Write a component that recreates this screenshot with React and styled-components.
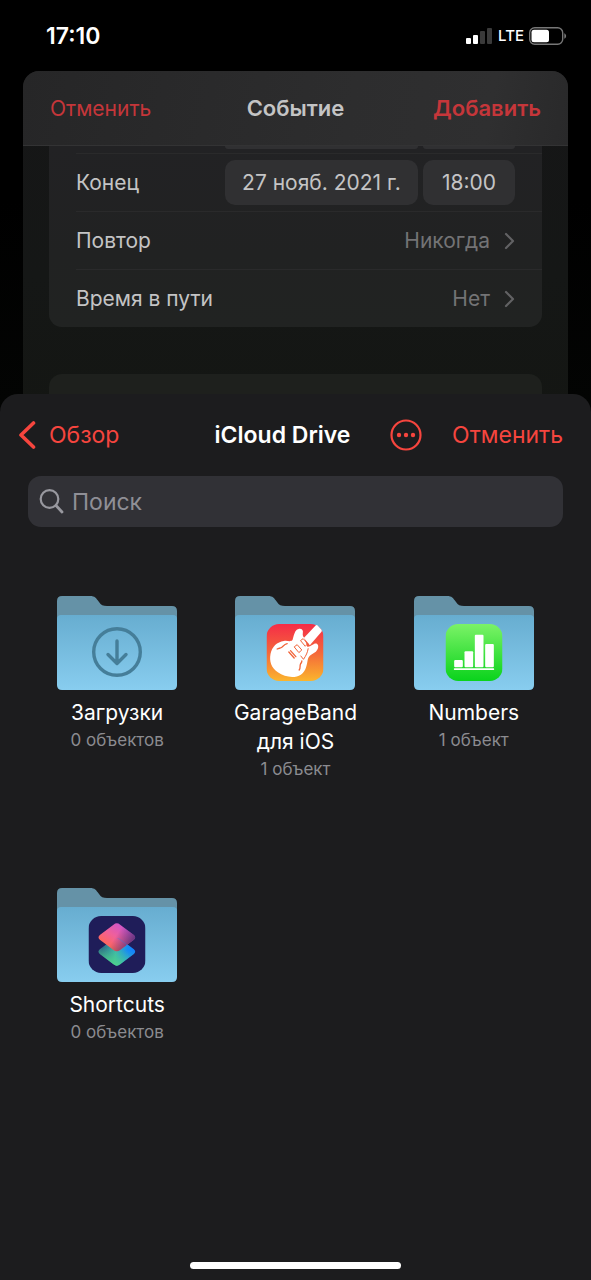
import React from "react";
import styled, { createGlobalStyle } from "styled-components";

const GlobalStyle = createGlobalStyle`
    * {
        box-sizing: border-box;
    }
    body {
        margin: 0;
        background: #000;
        font-family: Inter, "Liberation Sans", sans-serif;
        font-size: 21px;
    }
    button, input {
        font: inherit;
        color: inherit;
        border: 0;
        padding: 0;
        margin: 0;
        background: none;
    }
    h1, h2, p {
        margin: 0;
    }
`;

const Screen = styled.div`
    display: flex;
    flex-direction: column;
    min-height: 100vh;
    background: linear-gradient(#000 0, #000 200px, #030403 400px);
`;

const StatusBar = styled.header`
    display: flex;
    align-items: center;
    justify-content: space-between;
    height: 71px;
    padding: 0 24px 0 46px;
    color: #fff;
`;

const Clock = styled.time`
    font-size: 23px;
    font-weight: 600;
`;

const StatusIcons = styled.div`
    display: flex;
    align-items: center;
    gap: 5px;
    font-size: 15px;
    font-weight: 500;
`;

const EventSheet = styled.section`
    margin: 0 23px;
    border-radius: 16px 16px 0 0;
    overflow: hidden;
    background: linear-gradient(#161617, #151716 60%, #141613);
    color: #c4c4c5;
`;

const EventHeader = styled.div`
    display: grid;
    grid-template-columns: 1fr auto 1fr;
    align-items: center;
    height: 75px;
    padding: 0 27px;
    border-bottom: 1px solid #333334;
    background: linear-gradient(100deg, #262627, #2d2d2e 60%, #2f2f30 85%, #29292a);
`;

const EventTitle = styled.h2`
    font-size: 22px;
    font-weight: 600;
`;

const EventButton = styled.button`
    justify-self: ${props => props.$primary ? "end" : "start"};
    color: #c5363a;
    font-size: ${props => props.$primary ? 22 : 21}px;
    font-weight: ${props => props.$primary ? 600 : 400};
`;

const Group = styled.div`
    margin: 0 26px;
    padding-left: 27px;
    border-radius: 0 0 13px 13px;
    background: linear-gradient(#222224, #212222 60%, #212322);
`;

const NextGroup = styled.div`
    height: 40px;
    margin: 47px 26px 0;
    border-radius: 13px 13px 0 0;
    background: #1e201d;
`;

const Row = styled.div`
    display: flex;
    align-items: center;
    gap: 5px;
    height: 58px;
    padding-right: 27px;
    border-top: 1px solid #2a2a2b;
`;

const HiddenRow = styled(Row)`
    align-items: flex-start;
    justify-content: flex-end;
    height: 7px;
    border-top: 0;
`;

const PillEdge = styled.div`
    width: ${props => props.$wide ? 193 : 92}px;
    height: 3px;
    border-radius: 0 0 10px 10px;
    background: #303032;
`;

const RowLabel = styled.span`
    flex: 1;
    text-align: left;
`;

const Pill = styled.button`
    width: ${props => props.$wide ? 193 : 92}px;
    height: 45px;
    border-radius: 10px;
    background: #303032;
`;

const LinkRow = styled(Row).attrs({ as: "button" })`
    width: 100%;
    gap: 14px;
    border-top: 1px solid #2a2a2b;
    padding-right: 27px;
`;

const RowValue = styled.span`
    color: #737375;
`;

const FilesSheet = styled.main`
    position: relative;
    display: flex;
    flex: 1;
    flex-direction: column;
    margin-top: -20px;
    border-radius: 18px 18px 0 0;
    background: #1c1c1e;
    color: #fff;
`;

const FilesHeader = styled.div`
    display: flex;
    align-items: center;
    height: 82px;
    padding: 0 28px 0 18px;
    font-size: 23px;
`;

const FilesTitle = styled.h1`
    margin-right: 16px;
    font-size: 23px;
    font-weight: 600;
`;

const HeaderSide = styled.div`
    display: flex;
    flex: 1;
    align-items: center;
    justify-content: ${props => props.$end ? "flex-end" : "flex-start"};
    gap: 30px;
`;

const HeaderButton = styled.button`
    display: flex;
    align-items: center;
    gap: 12px;
    color: #f6453e;
`;

const SearchField = styled.label`
    display: flex;
    align-items: center;
    gap: 8px;
    height: 51px;
    margin: 0 28px;
    padding: 0 11px;
    border-radius: 13px;
    background: #313136;
    color: #98989f;
`;

const SearchInput = styled.input`
    flex: 1;
    min-width: 0;
    outline: 0;
    font-size: 23px;

    &::placeholder {
        color: #8f8f96;
        opacity: 1;
    }
`;

const FolderGrid = styled.div`
    display: grid;
    flex: 1;
    grid-template-columns: repeat(3, 1fr);
    grid-auto-rows: minmax(292px, auto);
    align-content: start;
    padding: 69px 28px 0;
`;

const Folder = styled.button`
    display: flex;
    flex-direction: column;
    align-items: center;
    align-self: start;
`;

const FolderName = styled.span`
    width: 136px;
    margin-top: 7px;
    line-height: 29px;
    font-size: 21px;
`;

const FolderCount = styled.span`
    line-height: 27px;
    font-size: 17px;
    color: #8b8b90;
`;

const HomeBar = styled.div`
    width: 211px;
    height: 7px;
    margin: 0 auto 11px;
    border-radius: 4px;
    background: #fff;
`;

function Signal() {
    return (
        <svg width="27" height="18" viewBox="0 0 27 18" aria-hidden="true">
            <rect x="0" y="11" width="5" height="6" rx="1" fill="#fff" />
            <rect x="7" y="8" width="5" height="9" rx="1" fill="#fff" />
            <rect x="14" y="4" width="5" height="13" rx="1" fill="#3a3a3a" />
            <rect x="21" y="1" width="5" height="16" rx="1" fill="#3a3a3a" />
        </svg>
    );
}

function Battery() {
    return (
        <svg width="38" height="18" viewBox="0 0 38 18" aria-hidden="true">
            <rect x="0.7" y="0.7" width="33" height="16.6" rx="5" fill="none" stroke="#777" strokeWidth="1.4" />
            <rect x="2.5" y="2.7" width="17.5" height="12.6" rx="2.5" fill="#fff" />
            <path d="M35.3 6.2c2.4 1.2 2.4 4.4 0 5.6z" fill="#777" />
        </svg>
    );
}

function Chevron() {
    return (
        <svg width="11" height="18" viewBox="0 0 11 18" aria-hidden="true">
            <path d="M2 2l7 7-7 7" fill="none" stroke="#626264" strokeWidth="2.2" strokeLinecap="round" strokeLinejoin="round" />
        </svg>
    );
}

function DownloadBadge() {
    return (
        <g fill="none" stroke="#457e99" strokeLinecap="round" strokeLinejoin="round">
            <circle cx="60" cy="56" r="23.3" strokeWidth="3.4" />
            <path d="M60 45v22M51 58.5l9 9 9-9" strokeWidth="3.4" />
        </g>
    );
}

function GarageBandBadge() {
    return (
        <svg x="31.5" y="28" width="57" height="57" viewBox="0 0 171 171">
            <defs>
                <linearGradient id="garage" x1="0" y1="0" x2="0" y2="1">
                    <stop offset="0" stopColor="#f52c48" />
                    <stop offset="0.5" stopColor="#f4673a" />
                    <stop offset="1" stopColor="#fbb52d" />
                </linearGradient>
            </defs>
            <rect width="171" height="171" rx="38" fill="url(#garage)" />
            <path
                fill="#fff"
                d="M78 48C82 36 84 18 96 15c10-2 15 4 13 12-1 6 0 10 4 14l10 28c14-2 20-14 29-9 6 5 3 17-4 23-9 7-20 9-24 23-3 16-5 36-21 46-18 12-48 8-69-7C14 131 8 112 12 90c4-22 20-36 40-39 12-2 20 4 26-3z"
            />
            <path d="M112 42l36-38q3-2 6 1l11 12q2 3 0 6l-35 41z" fill="#fff" />
            <g fill="none" stroke="#f1653b" strokeWidth="4" strokeLinecap="round" strokeLinejoin="round">
                <path d="M32 75c7-3 10-2 15-6 4-4 8-9 15-10" />
                <path d="M98 138c5-6 1-12 4-18 2-4 4-4 4-9" />
                <path d="M67 84l16 18M72 80l16 18" />
                <path d="M84 68l8-6 14 16-8 7zM103 49l7-5 14 15-7 7z" strokeWidth="3" />
                <path d="M103 96l8 10c8-12 12-20 14-32" strokeWidth="3" />
            </g>
        </svg>
    );
}

function NumbersBadge() {
    return (
        <svg x="31.5" y="28" width="57" height="57" viewBox="0 0 171 171">
            <defs>
                <linearGradient id="numbers" x1="0" y1="0" x2="0" y2="1">
                    <stop offset="0" stopColor="#7bf267" />
                    <stop offset="1" stopColor="#0ad31c" />
                </linearGradient>
            </defs>
            <rect width="171" height="171" rx="38" fill="url(#numbers)" />
            <g fill="#fff">
                <rect x="26" y="108" width="26" height="22" rx="3" />
                <rect x="57" y="82" width="26" height="48" rx="3" />
                <rect x="88" y="32" width="26" height="98" rx="3" />
                <rect x="119" y="60" width="26" height="70" rx="3" />
                <rect x="25" y="133" width="121" height="5" rx="2" />
            </g>
        </svg>
    );
}

const upperTile = "M75 26q10-8 20 0l41 31q8 7 0 14l-41 31q-10 8-20 0l-41-31q-8-7 0-14z";
const lowerTile = "M75 69q10-8 20 0l41 31q8 7 0 14l-41 31q-10 8-20 0l-41-31q-8-7 0-14z";

function ShortcutsBadge() {
    return (
        <svg x="31.5" y="28" width="57" height="57" viewBox="0 0 171 171">
            <defs>
                <linearGradient id="lower" x1="0.1" y1="0.4" x2="0.95" y2="0.5">
                    <stop offset="0" stopColor="#2b6c88" />
                    <stop offset="0.45" stopColor="#3cb8ab" />
                    <stop offset="0.8" stopColor="#178cf5" />
                    <stop offset="1" stopColor="#127eff" />
                </linearGradient>
                <linearGradient id="lowerGreen" x1="0.5" y1="0.4" x2="0.4" y2="1">
                    <stop offset="0" stopColor="#4fd389" stopOpacity="0" />
                    <stop offset="1" stopColor="#4fd389" />
                </linearGradient>
                <linearGradient id="upper" x1="0.15" y1="0.75" x2="0.7" y2="0.15">
                    <stop offset="0" stopColor="#ff6757" />
                    <stop offset="0.5" stopColor="#f0609a" />
                    <stop offset="1" stopColor="#d156c6" />
                </linearGradient>
                <linearGradient id="upperShade" x1="0.5" y1="0.4" x2="1" y2="0.65">
                    <stop offset="0" stopColor="#392668" stopOpacity="0" />
                    <stop offset="1" stopColor="#392668" stopOpacity="0.8" />
                </linearGradient>
            </defs>
            <rect width="171" height="171" rx="38" fill="#1f1d59" />
            <path d={lowerTile} fill="url(#lower)" />
            <path d={lowerTile} fill="url(#lowerGreen)" />
            <path d={upperTile} fill="url(#upper)" />
            <path d={upperTile} fill="url(#upperShade)" />
            <path d="M85 66q5-1 10 3l41 31q8 7 0 14l-14 10-10-39z" fill="#168af5" opacity="0.3" />
        </svg>
    );
}

function FolderIcon({ id, children }) {
    return (
        <svg width="120" height="95" viewBox="0 0 120 95" aria-hidden="true">
            <defs>
                <linearGradient id={id + "-front"} x1="0" y1="0" x2="0" y2="1">
                    <stop offset="0" stopColor="#67add0" />
                    <stop offset="1" stopColor="#88cdef" />
                </linearGradient>
            </defs>
            <path d="M0 5q0-5 5-5h28c5 0 6 2 9 6 2 3 4 4 8 4h65q5 0 5 5v20H0z" fill="#6592a7" />
            <path d="M0 23q0-4 4-4h112q4 0 4 4v66q0 5-5 5H5q-5 0-5-5z" fill={`url(#${id}-front)`} />
            {children}
        </svg>
    );
}

const folders = [
    { id: "downloads", name: "Загрузки", count: "0 объектов", Badge: DownloadBadge },
    { id: "garageband", name: "GarageBand для iOS", count: "1 объект", Badge: GarageBandBadge },
    { id: "numbersapp", name: "Numbers", count: "1 объект", Badge: NumbersBadge },
    { id: "shortcuts", name: "Shortcuts", count: "0 объектов", Badge: ShortcutsBadge },
];

export default function App() {
    return (
        <>
            <GlobalStyle />
            <Screen>
                <StatusBar>
                    <Clock>17:10</Clock>
                    <StatusIcons>
                        <Signal />
                        <span>LTE</span>
                        <Battery />
                    </StatusIcons>
                </StatusBar>

                <EventSheet>
                    <EventHeader>
                        <EventButton>Отменить</EventButton>
                        <EventTitle>Событие</EventTitle>
                        <EventButton $primary>Добавить</EventButton>
                    </EventHeader>
                    <Group>
                        <HiddenRow>
                            <PillEdge $wide />
                            <PillEdge />
                        </HiddenRow>
                        <Row>
                            <RowLabel>Конец</RowLabel>
                            <Pill $wide>27 нояб. 2021 г.</Pill>
                            <Pill>18:00</Pill>
                        </Row>
                        <LinkRow>
                            <RowLabel>Повтор</RowLabel>
                            <RowValue>Никогда</RowValue>
                            <Chevron />
                        </LinkRow>
                        <LinkRow>
                            <RowLabel>Время в пути</RowLabel>
                            <RowValue>Нет</RowValue>
                            <Chevron />
                        </LinkRow>
                    </Group>
                    <NextGroup />
                </EventSheet>

                <FilesSheet>
                    <FilesHeader>
                        <HeaderSide>
                            <HeaderButton>
                                <svg width="19" height="28" viewBox="0 0 19 28" aria-hidden="true">
                                    <path d="M15.5 2L3 14l12.5 12" fill="none" stroke="currentColor" strokeWidth="3.6" strokeLinecap="round" strokeLinejoin="round" />
                                </svg>
                                Обзор
                            </HeaderButton>
                        </HeaderSide>
                        <FilesTitle>iCloud Drive</FilesTitle>
                        <HeaderSide $end>
                            <HeaderButton aria-label="Ещё">
                                <svg width="32" height="32" viewBox="0 0 32 32" aria-hidden="true">
                                    <circle cx="16" cy="16" r="14.5" fill="none" stroke="currentColor" strokeWidth="2.2" />
                                    <circle cx="9" cy="16" r="2.2" fill="currentColor" />
                                    <circle cx="16" cy="16" r="2.2" fill="currentColor" />
                                    <circle cx="23" cy="16" r="2.2" fill="currentColor" />
                                </svg>
                            </HeaderButton>
                            <HeaderButton>Отменить</HeaderButton>
                        </HeaderSide>
                    </FilesHeader>

                    <SearchField>
                        <svg width="25" height="25" viewBox="0 0 25 25" aria-hidden="true">
                            <circle cx="10.5" cy="10" r="8.8" fill="none" stroke="currentColor" strokeWidth="2.2" />
                            <path d="M17 16.5l6 6.5" stroke="currentColor" strokeWidth="2.8" strokeLinecap="round" />
                        </svg>
                        <SearchInput type="search" placeholder="Поиск" aria-label="Поиск" />
                    </SearchField>

                    <FolderGrid>
                        {folders.map(({ id, name, count, Badge }) => (
                            <Folder key={id}>
                                <FolderIcon id={id}>
                                    <Badge />
                                </FolderIcon>
                                <FolderName>{name}</FolderName>
                                <FolderCount>{count}</FolderCount>
                            </Folder>
                        ))}
                    </FolderGrid>
                    <HomeBar />
                </FilesSheet>
            </Screen>
        </>
    );
}
